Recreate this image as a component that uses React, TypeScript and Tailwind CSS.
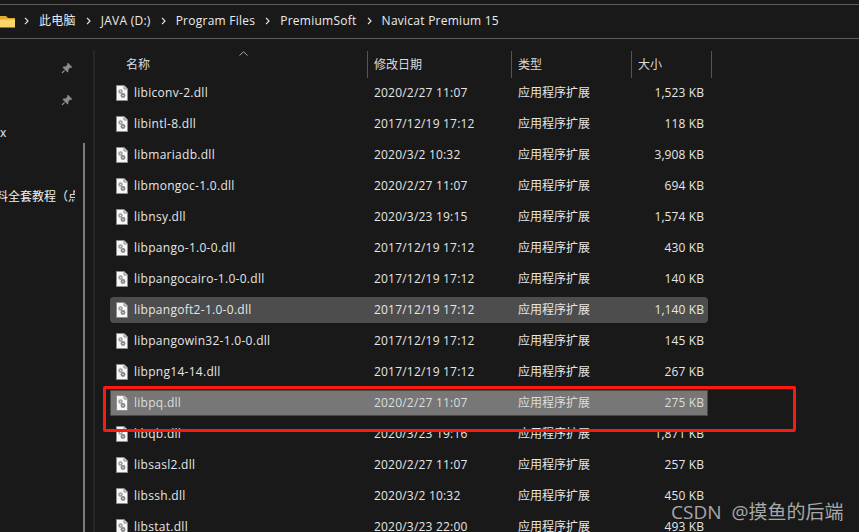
const font = { fontFamily: '"Open Sans", "Noto Sans CJK SC", sans-serif' }

const files = [
  { name: 'libiconv-2.dll', date: '2020/2/27 11:07', size: '1,523 KB' },
  { name: 'libintl-8.dll', date: '2017/12/19 17:12', size: '118 KB' },
  { name: 'libmariadb.dll', date: '2020/3/2 10:32', size: '3,908 KB' },
  { name: 'libmongoc-1.0.dll', date: '2020/2/27 11:07', size: '694 KB' },
  { name: 'libnsy.dll', date: '2020/3/23 19:15', size: '1,574 KB' },
  { name: 'libpango-1.0-0.dll', date: '2017/12/19 17:12', size: '430 KB' },
  { name: 'libpangocairo-1.0-0.dll', date: '2017/12/19 17:12', size: '140 KB' },
  { name: 'libpangoft2-1.0-0.dll', date: '2017/12/19 17:12', size: '1,140 KB', state: 'hover' },
  { name: 'libpangowin32-1.0-0.dll', date: '2017/12/19 17:12', size: '145 KB' },
  { name: 'libpng14-14.dll', date: '2017/12/19 17:12', size: '267 KB' },
  { name: 'libpq.dll', date: '2020/2/27 11:07', size: '275 KB', state: 'selected' },
  { name: 'libqb.dll', date: '2020/3/23 19:16', size: '1,871 KB' },
  { name: 'libsasl2.dll', date: '2020/2/27 11:07', size: '257 KB' },
  { name: 'libssh.dll', date: '2020/3/2 10:32', size: '450 KB' },
  { name: 'libstat.dll', date: '2020/3/23 22:00', size: '493 KB' },
]

const crumbs = ['此电脑', 'JAVA (D:)', 'Program Files', 'PremiumSoft', 'Navicat Premium 15']

function Chevron() {
  return (
    <svg width="5" height="8" viewBox="0 0 5 8" fill="none" className="shrink-0">
      <path d="M1 0.8L4 4L1 7.2" stroke="#e4e4e4" strokeWidth="1.2" />
    </svg>
  )
}

function FolderIcon() {
  return (
    <svg width="16" height="13" viewBox="0 0 16 13" className="shrink-0 -mr-[2px]">
      <path d="M0 1H6L8 3H15V12H0Z" fill="#e2a92e" />
      <path d="M0 4.5H15V12.5H0Z" fill="#fbd568" />
    </svg>
  )
}

function PinIcon() {
  return (
    <svg width="12" height="12" viewBox="0 0 12 12">
      <path d="M7 0.8L11.2 5L10.3 5.9L9.3 5.6L7.4 7.5L7.4 9.6L6.6 10.4L1.6 5.4L2.4 4.6L4.5 4.6L6.4 2.7L6.1 1.7Z" fill="#8c8c8c" />
      <path d="M3.6 8.4L1 11" stroke="#8c8c8c" strokeWidth="1.2" />
    </svg>
  )
}

function DllIcon() {
  return (
    <svg width="12" height="16" viewBox="0 0 12 16" className="shrink-0">
      <path d="M0.5 0.5H8L11.5 4V15.5H0.5Z" fill="#f7f7f7" stroke="#8f8f8f" />
      <path d="M8 0.5V4H11.5" fill="#d8d8d8" stroke="#8f8f8f" />
      <circle cx="4.5" cy="6.5" r="2.2" fill="#9a9aa0" />
      <circle cx="4.5" cy="6.5" r="0.8" fill="#e8e8e8" />
      <circle cx="7" cy="10.5" r="2.4" fill="#84848a" />
      <circle cx="7" cy="10.5" r="0.8" fill="#e0e0e0" />
    </svg>
  )
}

function FileRow({ name, date, size, state }: { name: string; date: string; size: string; state?: string }) {
  const bg =
    state === 'selected'
      ? 'bg-[#777777] shadow-[inset_0_0_0_1px_#4a4a4a] text-[#dddddd]'
      : state === 'hover'
        ? 'bg-[#4d4d4d] rounded-sm text-[#e6e6e6]'
        : 'text-[#e6e6e6]'
  return (
    <div className={`h-[26px] w-[598px] shrink-0 grid grid-cols-[264px_144px_114px_1fr] items-center text-[12px] ${bg}`}>
      <div className="flex items-center gap-[6px] pl-[6px]">
        <DllIcon />
        <span className="tracking-[0.28px]">{name}</span>
      </div>
      <span className="tracking-[0.2px]">{date}</span>
      <span>应用程序扩展</span>
      <span className="text-right pr-[4px] tracking-[0.1px]">{size}</span>
    </div>
  )
}

export default function App() {
  return (
    <div className="w-[859px] h-[532px] overflow-hidden relative bg-[#191919]" style={font}>
      <div className="pt-[4px]">
        <div className="h-[35px] border-y border-[#5e5e5e] flex items-center gap-[10px] pb-px text-[12px] tracking-[0.25px] text-[#ececec]">
          <FolderIcon />
          {crumbs.map((c) => (
            <div key={c} className="flex items-center gap-[10px]">
              <Chevron />
              <span>{c}</span>
            </div>
          ))}
        </div>
      </div>

      <div className="flex h-[493px]">
        <aside className="w-[95px] shrink-0 relative text-[12px] text-[#f0f0f0]">
          <div className="flex flex-col items-end gap-[20px] pt-[23px] pr-[23px]">
            <div className="translate-x-px"><PinIcon /></div>
            <div className="translate-x-px"><PinIcon /></div>
          </div>
          <div className="mt-[19px] leading-[16px]">x</div>
          <div className="mt-[48px] w-[79px] overflow-hidden whitespace-nowrap -ml-[4px] leading-[16px]">料全套教程（点</div>
          <div className="absolute left-[83px] top-[104px] bottom-0 w-[2px] bg-[#7c7c7c]" />
          <div className="absolute right-0 top-[11px] bottom-0 w-[2px] bg-[#272727]" />
        </aside>

        <main className="flex-1 pl-[15px] pt-[12px] relative">
          <div className="h-[27px] w-[602px] grid grid-cols-[257px_144px_120px_81px] text-[12px] text-[#dcdcdc] relative">
            <div className="flex items-center pl-[16px]">名称</div>
            <div className="flex items-center pl-[6px] border-l border-[#555555]">修改日期</div>
            <div className="flex items-center pl-[6px] border-l border-[#555555]">类型</div>
            <div className="flex items-center pl-[6px] border-x border-[#555555]">大小</div>
            <svg width="9" height="5" viewBox="0 0 9 5" fill="none" className="absolute left-[129px] top-0">
              <path d="M0.5 4.5L4.5 0.8L8.5 4.5" stroke="#a8a8a8" />
            </svg>
          </div>
          <div className="flex flex-col gap-[5px] mt-[2px]">
            {files.map((f) => (
              <FileRow key={f.name} {...f} />
            ))}
          </div>
        </main>
      </div>

      <div className="absolute left-[103px] top-[386px] w-[693px] h-[46px] border-[3px] border-[#fb1a12] rounded-[2px]" />
      <div className="absolute left-[671px] top-[499px] text-[19px] leading-[26px] text-[#a8a8a8] whitespace-nowrap [word-spacing:5px]">CSDN @摸鱼的后端</div>
    </div>
  )
}
